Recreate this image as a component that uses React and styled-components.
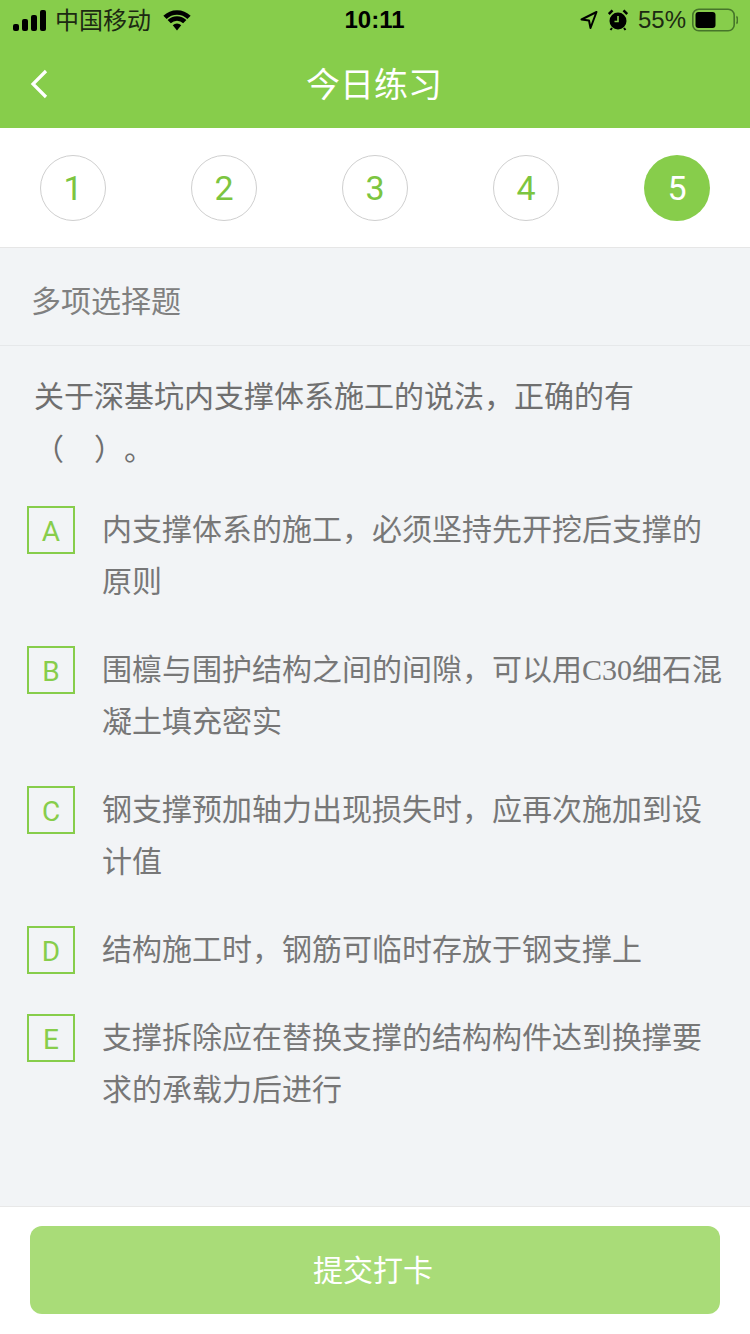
import React from 'react';
import styled, { createGlobalStyle } from 'styled-components';

const GREEN = '#87cd4b';

const steps = [1, 2, 3, 4, 5];

const GlobalStyle = createGlobalStyle`
  html, body {
    margin: 0;
    padding: 0;
  }
  body {
    font-family: "Liberation Sans", "Noto Sans CJK SC", sans-serif;
    text-spacing-trim: space-all;
  }
  * {
    box-sizing: border-box;
  }
`;

const Serif = styled.span`
  font-family: "Liberation Serif", serif;
`;

const options = [
  { key: 'A', text: '内支撑体系的施工，必须坚持先开挖后支撑的原则' },
  { key: 'B', text: <>围檩与围护结构之间的间隙，可以用<Serif>C30</Serif>细石混凝土填充密实</> },
  { key: 'C', text: '钢支撑预加轴力出现损失时，应再次施加到设计值' },
  { key: 'D', text: '结构施工时，钢筋可临时存放于钢支撑上' },
  { key: 'E', text: '支撑拆除应在替换支撑的结构构件达到换撑要求的承载力后进行' },
];

export default function App() {
  return (
    <Page>
      <GlobalStyle />
      <Header>
        <StatusBar>
          <StatusLeft>
            <svg width="33" height="21" viewBox="0 0 33 21">
              <rect x="0" y="14" width="6" height="7" rx="2" fill="#000" />
              <rect x="9" y="9" width="6" height="12" rx="2" fill="#000" />
              <rect x="18" y="5" width="6" height="16" rx="2" fill="#000" />
              <rect x="27" y="0" width="6" height="21" rx="2" fill="#000" />
            </svg>
            <Carrier>中国移动</Carrier>
            <svg width="30" height="22" viewBox="0 0 30 22">
              <path d="M2.98 8.48 A17 17 0 0 1 27.02 8.48" fill="none" stroke="#000" strokeWidth="4.6" />
              <path d="M7.22 12.72 A11 11 0 0 1 22.78 12.72" fill="none" stroke="#000" strokeWidth="4.6" />
              <path d="M15 21.5 L10.76 16.26 A6 6 0 0 1 19.24 16.26 Z" fill="#000" />
            </svg>
          </StatusLeft>
          <Time>10:11</Time>
          <StatusRight>
            <svg width="18" height="20" viewBox="0 0 18 20">
              <path d="M16.5 2 L1.5 9.5 L9 10.5 L10.5 18 Z" fill="none" stroke="#000" strokeWidth="2" strokeLinejoin="round" />
            </svg>
            <svg width="20" height="22" viewBox="0 0 20 22">
              <circle cx="10" cy="12" r="8.5" fill="#000" />
              <path d="M10 7 V12.5 H6.5" fill="none" stroke={GREEN} strokeWidth="1.6" />
              <path d="M0.8 5 L4.5 1.4 M19.2 5 L15.5 1.4" stroke="#000" strokeWidth="2.6" />
              <path d="M4 19 L2.5 21 M16 19 L17.5 21" stroke="#000" strokeWidth="2" />
            </svg>
            <Battery>55%</Battery>
            <svg width="46" height="24" viewBox="0 0 46 24">
              <rect x="0.8" y="1.2" width="41.4" height="21.6" rx="6" fill="none" stroke="#46752a" strokeWidth="1.6" />
              <rect x="3.5" y="4" width="20" height="16" rx="3" fill="#000" />
              <path d="M44.4 8.5 C 45.8 9.2, 45.8 14.8, 44.4 15.5" fill="none" stroke="#46752a" strokeWidth="1.6" />
            </svg>
          </StatusRight>
        </StatusBar>
        <NavBar>
          <BackIcon width="18" height="30" viewBox="0 0 18 30">
            <path d="M16 2 L3 15 L16 28" fill="none" stroke="#fff" strokeWidth="3.2" />
          </BackIcon>
          <Title>今日练习</Title>
          <span />
        </NavBar>
      </Header>

      <Steps>
        {steps.map((n) => (
          <Step key={n} $active={n === 5}>{n}</Step>
        ))}
      </Steps>

      <Main>
        <SectionLabel>多项选择题</SectionLabel>
        <Question>
          关于深基坑内支撑体系施工的说法，正确的有<br />（　）。
        </Question>
        <OptionList>
          {options.map((o) => (
            <Option key={o.key}>
              <OptionKey>{o.key}</OptionKey>
              <OptionText>{o.text}</OptionText>
            </Option>
          ))}
        </OptionList>
      </Main>

      <Footer>
        <Submit>提交打卡</Submit>
      </Footer>
    </Page>
  );
}

const Page = styled.div`
  display: flex;
  flex-direction: column;
  height: 1334px;
  background: #f2f4f6;
  overflow: hidden;
`;

const Header = styled.header`
  background: ${GREEN};
  height: 128px;
`;

const StatusBar = styled.div`
  display: grid;
  grid-template-columns: 1fr auto 1fr;
  align-items: center;
  height: 40px;
  padding: 0 12px 0 13px;
  color: #000;
`;

const StatusLeft = styled.div`
  display: flex;
  align-items: center;
  gap: 9px;
`;

const Carrier = styled.span`
  font-size: 24px;
  margin-right: 2px;
  padding-bottom: 4px;
  color: #1c2a12;
`;

const Time = styled.span`
  font-size: 24px;
  font-weight: 700;
  margin-right: 2px;
`;

const StatusRight = styled.div`
  display: flex;
  align-items: center;
  justify-content: flex-end;
  gap: 10px;
`;

const Battery = styled.span`
  font-size: 24px;
  margin-right: -4px;
  color: #1c2a12;
`;

const NavBar = styled.div`
  display: grid;
  grid-template-columns: 1fr auto 1fr;
  align-items: center;
  height: 88px;
  padding: 0 30px;
`;

const BackIcon = styled.svg`
  display: block;
`;

const Title = styled.div`
  font-size: 34px;
  padding: 0 2px 3px 0;
  color: #fff;
`;

const Steps = styled.div`
  display: flex;
  justify-content: space-between;
  align-items: center;
  height: 120px;
  padding: 0 40px;
  background: #fff;
  border-bottom: 1px solid #e6e6e6;
`;

const Step = styled.div`
  display: flex;
  justify-content: center;
  align-items: center;
  width: 66px;
  height: 66px;
  border-radius: 50%;
  font-family: Roboto, "Liberation Sans", sans-serif;
  font-size: 34px;
  border: ${(p) => (p.$active ? 'none' : '1px solid #cfcfcf')};
  background: ${(p) => (p.$active ? GREEN : '#fff')};
  color: ${(p) => (p.$active ? '#fff' : '#7cc540')};
`;

const Main = styled.main`
  flex: 1;
  min-height: 0;
`;

const SectionLabel = styled.div`
  display: flex;
  align-items: center;
  height: 98px;
  padding: 5px 31px 0;
  font-size: 30px;
  color: #808080;
  border-bottom: 1px solid #e6e8ea;
`;

const Question = styled.div`
  padding: 24px 28px 0 34px;
  font-size: 30px;
  line-height: 53px;
  color: #6f6f6f;
`;

const OptionList = styled.div`
  display: flex;
  flex-direction: column;
  gap: 36px;
  padding: 28px 22px 0 27px;
`;

const Option = styled.div`
  display: flex;
  align-items: flex-start;
  gap: 27px;
`;

const OptionKey = styled.div`
  flex: none;
  display: flex;
  justify-content: center;
  align-items: center;
  width: 48px;
  height: 48px;
  margin-top: 2px;
  padding-top: 3px;
  border: 2px solid ${GREEN};
  font-family: Roboto, "Liberation Sans", sans-serif;
  font-size: 28px;
  color: ${GREEN};
`;

const OptionText = styled.div`
  font-size: 30px;
  line-height: 52px;
  color: #777;
`;

const Footer = styled.footer`
  height: 128px;
  padding: 19px 30px;
  background: #fff;
  border-top: 1px solid #e8e8e8;
`;

const Submit = styled.button`
  display: block;
  width: 100%;
  height: 88px;
  padding: 0 4px 4px 0;
  border: none;
  border-radius: 12px;
  background: #a9dc78;
  color: #fff;
  font-family: inherit;
  font-size: 30px;
`;
